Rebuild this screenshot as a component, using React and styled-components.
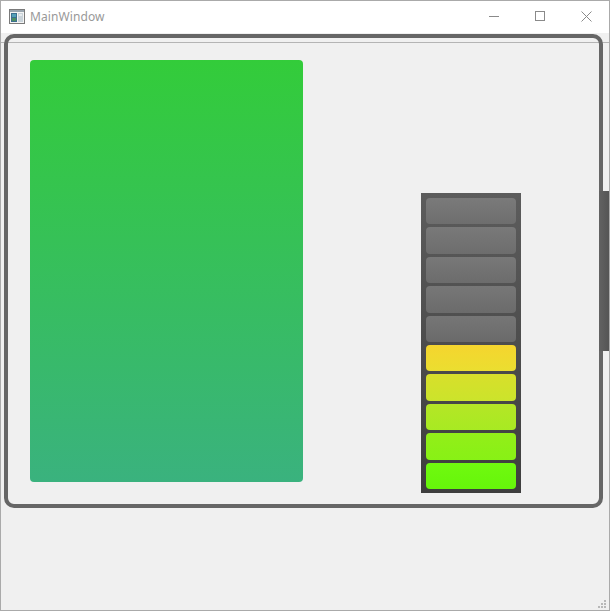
import React from "react";
import styled, { createGlobalStyle } from "styled-components";

const Global = createGlobalStyle`
  html, body { margin: 0; padding: 0; background: #ffffff; }
  body { font-family: "Noto Sans", "Open Sans", sans-serif; }
  * { box-sizing: border-box; }
`;

const Window = styled.div`
  width: 610px;
  height: 611px;
  border: 1px solid #aaaaaa;
  display: flex;
  flex-direction: column;
  background: #f0f0f0;
`;

const TitleBar = styled.div`
  height: 32px;
  background: #ffffff;
  display: flex;
  align-items: center;
  flex: none;
`;

const AppIcon = styled.div`
  width: 16px;
  height: 15px;
  margin-left: 8px;
  margin-top: -1px;
  display: flex;
`;

const Title = styled.span`
  margin-left: 5px;
  font-family: "Noto Sans", sans-serif;
  font-size: 12px;
  color: #999999;
  margin-top: -1px;
  letter-spacing: 0.1px;
`;

const Spacer = styled.div`
  flex: 1;
`;

const CaptionButton = styled.div`
  width: 46px;
  height: 32px;
  display: flex;
  align-items: center;
  justify-content: center;
  margin-top: -2px;
`;

const Client = styled.div`
  flex: 1;
  display: grid;
  grid-template-columns: 1fr;
  grid-template-rows: 1fr;
  position: relative;
`;

const Rule = styled.div`
  grid-area: 1 / 1;
  align-self: start;
  margin-top: 9px;
  height: 1px;
  background: #b4b4b4;
`;

const Frame = styled.div`
  grid-area: 1 / 1;
  align-self: start;
  margin: 1px 0 0 3px;
  width: 599px;
  height: 474px;
  border: 4px solid #666666;
  border-radius: 10px;
  display: flex;
  align-items: flex-start;
  position: relative;
`;

const GreenPanel = styled.div`
  margin: 22px 0 0 22px;
  width: 273px;
  height: 422px;
  border-radius: 4px;
  background: linear-gradient(to bottom, #33cc3a, #3ab27e);
`;

const Meter = styled.div`
  margin: 155px 0 0 118px;
  width: 100px;
  height: 300px;
  padding: 5px 5px 4px 5px;
  background: linear-gradient(to bottom, #5c5c5c, #3e3e3e);
  display: flex;
  flex-direction: column;
  gap: 3px;
`;

const Segment = styled.div`
  flex: 1;
  border-radius: 4px;
  background: linear-gradient(to bottom, ${(p) => p.$top}, ${(p) => p.$bottom});
`;

const Handle = styled.div`
  position: absolute;
  right: 0;
  top: 158px;
  width: 10px;
  height: 160px;
  background: linear-gradient(to right, #626262, #555555);
`;

const Grip = styled.div`
  position: absolute;
  right: 2px;
  bottom: 1px;
  width: 9px;
  height: 9px;
  display: flex;
`;

const segments = [
  ["#7a7a7a", "#6e6e6e"],
  ["#797979", "#6d6d6d"],
  ["#787878", "#6c6c6c"],
  ["#777777", "#6b6b6b"],
  ["#767676", "#6a6a6a"],
  ["#f5d52e", "#ebde30"],
  ["#d8df2b", "#cbe42b"],
  ["#b5e626", "#a8ea22"],
  ["#93ee19", "#88f115"],
  ["#70f90f", "#66f60a"],
];

export default function App() {
  return (
    <>
      <Global />
      <Window>
        <TitleBar>
          <AppIcon>
            <svg width="16" height="15" viewBox="0 0 16 15">
              <rect x="0.5" y="0.5" width="15" height="14" fill="#f4f4f4" stroke="#7a7a7a" />
              <rect x="1" y="1" width="14" height="2" fill="#9aa6b0" />
              <rect x="2" y="4" width="6" height="9" fill="#3b6f8f" />
              <rect x="3" y="5" width="4" height="3" fill="#52a0b8" />
              <rect x="3" y="9" width="4" height="3" fill="#4c8f62" />
              <rect x="9" y="4" width="5" height="9" fill="#c9d3da" />
              <rect x="10" y="5" width="3" height="2" fill="#e6ebee" />
            </svg>
          </AppIcon>
          <Title>MainWindow</Title>
          <Spacer />
          <CaptionButton>
            <svg width="10" height="10" viewBox="0 0 10 10">
              <line x1="0" y1="5.5" x2="10" y2="5.5" stroke="#8a8a8a" strokeWidth="1" />
            </svg>
          </CaptionButton>
          <CaptionButton>
            <svg width="10" height="10" viewBox="0 0 10 10">
              <rect x="0.5" y="0.5" width="9" height="9" fill="none" stroke="#8a8a8a" strokeWidth="1" />
            </svg>
          </CaptionButton>
          <CaptionButton>
            <svg width="11" height="11" viewBox="0 0 11 11">
              <line x1="0.5" y1="0.5" x2="10.5" y2="10.5" stroke="#8a8a8a" strokeWidth="1" />
              <line x1="10.5" y1="0.5" x2="0.5" y2="10.5" stroke="#8a8a8a" strokeWidth="1" />
            </svg>
          </CaptionButton>
        </TitleBar>
        <Client>
          <Rule />
          <Frame>
            <GreenPanel />
            <Meter>
              {segments.map(([t, b], i) => (
                <Segment key={i} $top={t} $bottom={b} />
              ))}
            </Meter>
          </Frame>
          <Handle />
          <Grip>
            <svg width="9" height="9" viewBox="0 0 9 9">
              <rect x="6" y="0" width="2" height="2" fill="#b8b8b8" />
              <rect x="3" y="3" width="2" height="2" fill="#b8b8b8" />
              <rect x="6" y="3" width="2" height="2" fill="#b8b8b8" />
              <rect x="0" y="6" width="2" height="2" fill="#b8b8b8" />
              <rect x="3" y="6" width="2" height="2" fill="#b8b8b8" />
              <rect x="6" y="6" width="2" height="2" fill="#b8b8b8" />
            </svg>
          </Grip>
        </Client>
      </Window>
    </>
  );
}
